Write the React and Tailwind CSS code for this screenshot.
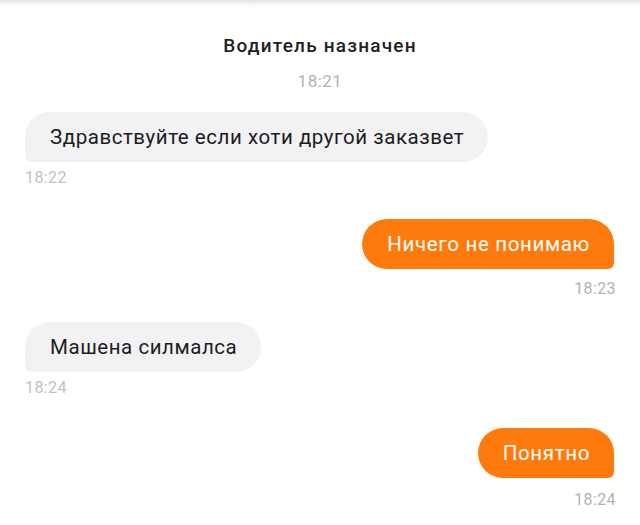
export default function App() {
  const font = { fontFamily: "Roboto, 'Noto Sans', sans-serif" };
  return (
    <div className="w-[640px] h-[525px] bg-white overflow-hidden flex flex-col" style={font}>
      <div className="h-[8px] bg-gradient-to-b from-[#e4e4e4] via-[#f6f6f6] to-white" />
      <div className="mt-[26px] text-center text-[19px] leading-[24px] font-medium tracking-[1.2px] text-[#222]">
        Водитель назначен
      </div>
      <div className="mt-[13px] text-center text-[17px] leading-[20px] tracking-[0.5px] text-[#b3b3b3]">18:21</div>

      <div className="px-[25px] flex flex-col">
        <div className="mt-[21px] self-start h-[50px] flex items-center pl-[25px] pr-[24px] bg-[#f2f2f4] rounded-[25px] rounded-bl-[6px] text-[20.5px] tracking-[0.55px] text-[#1c1c1c]">
          Здравствуйте если хоти другой заказвет
        </div>
        <div className="mt-[8px] self-start text-[16px] leading-[16px] tracking-[0.4px] text-[#c2c2c2]">18:22</div>

        <div className="mt-[33px] self-end mr-[1px] h-[50px] flex items-center pl-[25px] pr-[24px] bg-[#fe7a0c] rounded-[25px] rounded-br-[6px] text-[20.5px] tracking-[0.65px] text-white">
          Ничего не понимаю
        </div>
        <div className="mt-[12px] self-end -mr-[1px] text-[16px] leading-[16px] tracking-[0.4px] text-[#b3b3b3]">18:23</div>

        <div className="mt-[25px] self-start h-[50px] flex items-center pl-[25px] pr-[24px] bg-[#f2f2f4] rounded-[25px] rounded-bl-[6px] text-[20.5px] tracking-[0.55px] text-[#1c1c1c]">
          Машена силмалса
        </div>
        <div className="mt-[8px] self-start text-[16px] leading-[16px] tracking-[0.4px] text-[#c2c2c2]">18:24</div>

        <div className="mt-[32px] self-end mr-[1px] h-[50px] flex items-center pl-[25px] pr-[24px] bg-[#fe7a0c] rounded-[25px] rounded-br-[6px] text-[20.5px] tracking-[0.65px] text-white">
          Понятно
        </div>
        <div className="mt-[14px] self-end -mr-[1px] text-[16px] leading-[16px] tracking-[0.4px] text-[#b3b3b3]">18:24</div>
      </div>
    </div>
  );
}
